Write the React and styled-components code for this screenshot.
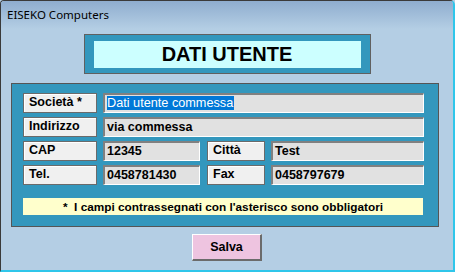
import React from 'react';
import styled, { createGlobalStyle } from 'styled-components';

const GlobalStyle = createGlobalStyle`
  html, body {
    margin: 0;
    padding: 0;
    background: #b4cee4;
  }
`;

const Window = styled.div`
  width: 455px;
  height: 272px;
  box-sizing: border-box;
  border-top: 1px solid #3a3a3a;
  border-left: 1px solid #3a3a3a;
  border-right: 2px solid #2fc6ea;
  border-bottom: 2px solid #2fc6ea;
  border-top-right-radius: 5px;
  border-top-left-radius: 4px;
  background: #b4cee4;
  display: flex;
  flex-direction: column;
  overflow: hidden;
`;

const TitleBar = styled.div`
  height: 28px;
  flex: none;
  padding: 6px 0 0 6px;
  box-sizing: border-box;
  background: linear-gradient(#8fadcf, #b4cee4);
  font-family: "Noto Sans", "Open Sans", sans-serif;
  font-size: 11.5px;
  color: #000;
`;

const Content = styled.div`
  display: flex;
  flex-direction: column;
  align-items: center;
  padding-top: 5px;
`;

const Heading = styled.div`
  width: 287px;
  height: 40px;
  box-sizing: border-box;
  border: 1px solid #606060;
  background: #3397bd;
  padding: 6px 9px 5px;
  display: flex;
`;

const HeadingInner = styled.div`
  flex: 1;
  background: #ccffff;
  display: flex;
  align-items: center;
  justify-content: center;
  font-family: "Liberation Sans", Arial, sans-serif;
  font-weight: bold;
  font-size: 20px;
  color: #000;
`;

const Panel = styled.div`
  align-self: flex-start;
  margin: 9px 0 0 10px;
  width: 428px;
  height: 144px;
  box-sizing: border-box;
  border: 1px solid #555;
  background: #3397bd;
  padding: 9px 11px 0 11px;
`;

const Grid = styled.div`
  display: grid;
  grid-template-columns: 74px 97px 59px 153px;
  grid-auto-rows: 20px;
  column-gap: 6px;
  row-gap: 4px;
`;

const Label = styled.div`
  box-sizing: border-box;
  background: #f0f0f0;
  border: 1px solid #6a6a6a;
  box-shadow: inset 1px 1px 0 #ffffff;
  padding: 1px 0 0 5px;
  font-family: "Liberation Sans", Arial, sans-serif;
  font-weight: bold;
  font-size: 12.5px;
  color: #000;
  white-space: nowrap;
  margin-left: ${p => p.$shift || 0}px;
`;

const Field = styled.div`
  box-sizing: border-box;
  grid-column: ${p => (p.$wide ? 'span 3' : 'auto')};
  background: #e1e1e1;
  border-top: 2px solid #808080;
  border-left: 2px solid #808080;
  border-right: 1px solid #ffffff;
  border-bottom: 1px solid #ffffff;
  padding: 1px 0 0 2px;
  font-family: "Liberation Sans", Arial, sans-serif;
  font-weight: bold;
  font-size: 12.5px;
  color: #000;
  white-space: nowrap;
  overflow: hidden;
`;

const Selected = styled.span`
  background: #0078d7;
  color: #fff;
  font-weight: normal;
  font-size: 12.7px;
  padding-right: 1px;
`;

const Note = styled.div`
  margin-top: 13px;
  width: 400px;
  height: 17px;
  background: #ffffcc;
  display: flex;
  align-items: center;
  justify-content: center;
  font-family: "Liberation Sans", Arial, sans-serif;
  font-weight: bold;
  font-size: 11.8px;
  color: #000;
  white-space: pre;
`;

const SaveButton = styled.button`
  margin-top: 7px;
  width: 70px;
  height: 27px;
  box-sizing: border-box;
  background: #eec4e0;
  border-top: 1px solid #ffffff;
  border-left: 1px solid #ffffff;
  border-right: 2px solid #6b6b6b;
  border-bottom: 2px solid #6b6b6b;
  font-family: "Liberation Sans", Arial, sans-serif;
  font-weight: bold;
  font-size: 12.5px;
  color: #000;
  padding: 0;
`;

export default function App() {
  return (
    <>
      <GlobalStyle />
      <Window>
        <TitleBar>EISEKO Computers</TitleBar>
        <Content>
          <Heading>
            <HeadingInner>DATI UTENTE</HeadingInner>
          </Heading>
          <Panel>
            <Grid>
              <Label>Società *</Label>
              <Field $wide>
                <Selected>Dati utente commessa</Selected>
              </Field>
              <Label>Indirizzo</Label>
              <Field $wide>via commessa</Field>
              <Label>CAP</Label>
              <Field>12345</Field>
              <Label $shift={1}>Città</Label>
              <Field>Test</Field>
              <Label>Tel.</Label>
              <Field>0458781430</Field>
              <Label $shift={1}>Fax</Label>
              <Field>0458797679</Field>
            </Grid>
            <Note>{"*  I campi contrassegnati con l'asterisco sono obbligatori"}</Note>
          </Panel>
          <SaveButton>Salva</SaveButton>
        </Content>
      </Window>
    </>
  );
}
